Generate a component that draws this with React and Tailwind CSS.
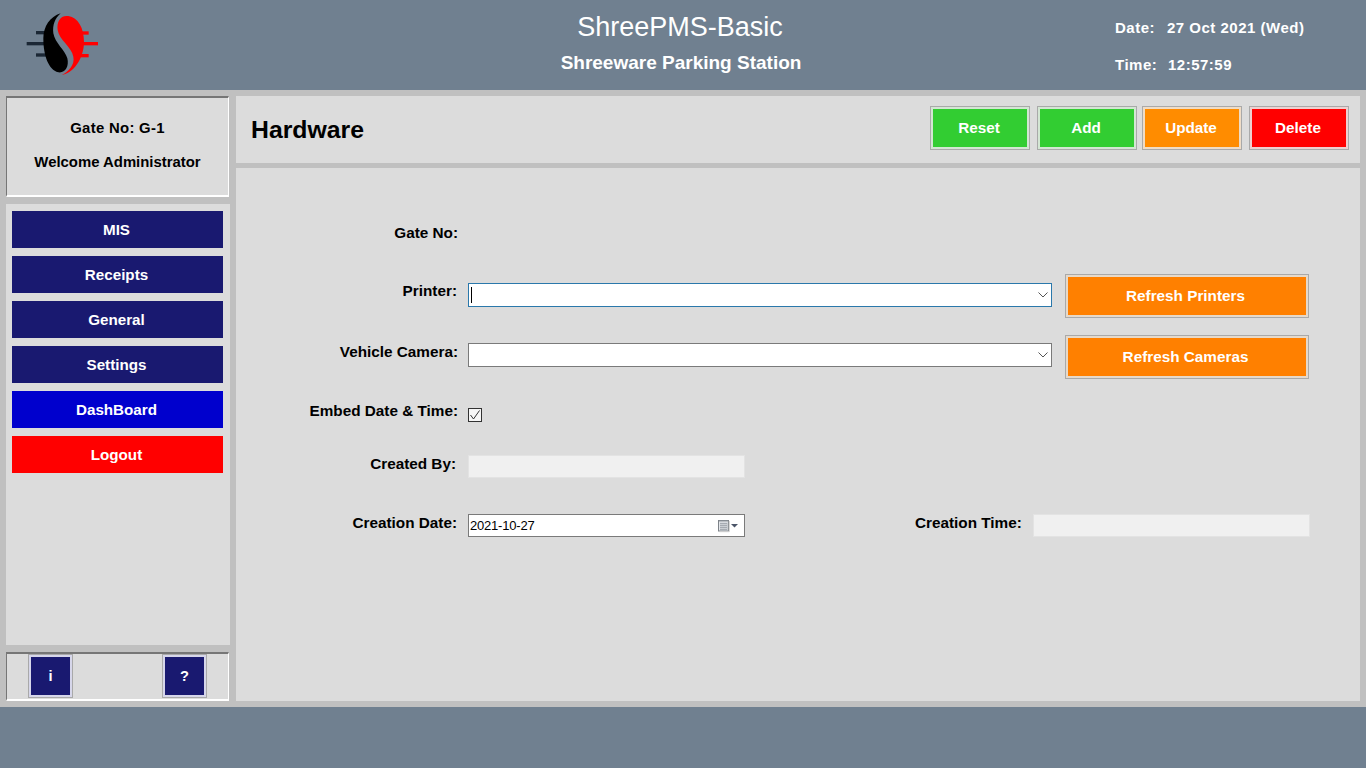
import React from "react";

const FONT = "font-['Liberation_Sans',Arial,sans-serif]";

function Logo() {
  return (
    <svg width="100" height="80" viewBox="0 0 300 240" className="blur-[0.5px]">
      <g stroke="#1b2735" strokeWidth="10" strokeLinecap="butt">
        <path d="M50 116H105" />
        <path d="M78 83H108" />
        <path d="M78 150H108" />
      </g>
      <g stroke="#f00" strokeWidth="10" strokeLinecap="butt">
        <path d="M215 84H236" />
        <path d="M218 116H264" />
        <path d="M210 152H236" />
      </g>
      <path d="M152 25C120 35 100 65 100 100C100 150 115 195 145 202C165 205 178 185 172 160C165 135 135 115 130 85C127 60 135 40 152 25Z" fill="#000" />
      <path d="M175 33C150 30 140 50 143 75C147 105 185 125 190 155C195 180 175 200 155 210C190 205 222 160 222 110C222 70 205 38 175 33Z" fill="#f00" />
    </svg>
  );
}

function TopButton({ label, fill, halo, ml }) {
  return (
    <button className={`w-[100px] h-[44px] border border-[#a9a9a9] p-[2px] ${halo} ${ml}`}>
      <span className={`flex h-full w-full items-center justify-center pr-[2px] text-[15.25px] font-bold text-white ${fill}`}>{label}</span>
    </button>
  );
}

function MenuButton({ label, fill = "bg-[#191970]" }) {
  return (
    <button className={`h-[37px] w-[211px] pr-[2px] pt-[2px] ${fill} text-[15.2px] font-bold text-white`}>{label}</button>
  );
}

function SmallButton({ label, ml }) {
  return (
    <button className={`h-[44px] w-[45px] border border-[#a9a9a9] bg-[#d6d6ea] p-[2px] ${ml}`}>
      <span className="flex h-full w-full items-center justify-center bg-[#191970] text-[14.67px] font-bold text-white">{label}</span>
    </button>
  );
}

function RefreshButton({ label }) {
  return (
    <button className="ml-[13px] h-[44px] w-[244px] border border-[#a9a9a9] bg-[#e6d9ca] p-[2px]">
      <span className="flex h-full w-full items-center justify-center pr-[3px] text-[15.3px] font-bold text-[#fff] bg-[#ff8000]">{label}</span>
    </button>
  );
}

function Label({ children, className = "pr-[1px]" }) {
  return (
    <div className={`w-[222px] text-right text-[15.3px] font-bold text-black ${className}`}>{children}</div>
  );
}

function Chevron() {
  return (
    <svg width="10" height="6" viewBox="0 0 10 6" className="mr-[3px] shrink-0">
      <path d="M0.5 0.5L5 5L9.5 0.5" fill="none" stroke="#555" strokeWidth="1" />
    </svg>
  );
}

function Combo({ focused }) {
  return (
    <div className={`ml-[10px] flex h-[24px] w-[584px] items-center justify-between bg-white ${focused ? "border border-[#2a78ab]" : "border border-[#7a7a7a]"}`}>
      <span className="ml-[2px] flex items-center">
        {focused && <span className="block h-[16px] w-[1px] bg-black" />}
      </span>
      <Chevron />
    </div>
  );
}

function CalendarIcon() {
  return (
    <svg width="22" height="14" viewBox="0 0 22 14" className="mr-[4px] shrink-0">
      <rect x="0.5" y="1.5" width="10" height="10.5" fill="#e4e7eb" stroke="#7d8288" />
      <path d="M1 2H10" stroke="#8f959c" />
      <path d="M2 4.5H9M2 6.5H9M2 8.5H9M2 10.5H9M3 3.5V11M5 3.5V11M7 3.5V11M9 3.5V11" stroke="#8f959c" strokeWidth="0.6" />
      <path d="M1.5 12.7H11.3V2" fill="none" stroke="#d0d0d0" />
      <path d="M13 5H20L16.5 8.5Z" fill="#4b5568" />
    </svg>
  );
}

export default function App() {
  return (
    <div className={`flex h-[768px] w-[1366px] flex-col overflow-hidden bg-[#c0c0c0] ${FONT}`}>
      <header className="flex h-[90px] shrink-0 bg-[#708090] text-white">
        <div className="w-[250px] pl-[10px] pt-[5px]">
          <Logo />
        </div>
        <div className="flex w-[860px] flex-col items-center">
          <div className="mt-[11px] h-[32px] text-[27px] leading-[32px]">ShreePMS-Basic</div>
          <div className="ml-[2px] mt-[9px] text-[19px] font-bold leading-[22px]">Shreeware Parking Station</div>
        </div>
        <div className="pl-[5px] text-[15px] font-bold tracking-[0.5px]">
          <div className="mt-[20px] flex h-[16px] items-center">
            <span className="w-[52px]">Date:</span>
            <span>27 Oct 2021 (Wed)</span>
          </div>
          <div className="mt-[21px] flex h-[16px] items-center">
            <span className="w-[53px]">Time:</span>
            <span>12:57:59</span>
          </div>
        </div>
      </header>

      <div className="flex h-[617px] shrink-0 gap-[6px] p-[6px]">
        <aside className="flex w-[224px] shrink-0 flex-col">
          <div className="flex h-[101px] w-[223px] shrink-0 flex-col items-center justify-center gap-[17px] border-b-2 border-l border-r border-t-2 border-b-white border-l-[#767676] border-r-white border-t-[#767676] bg-[#dcdcdc] pb-[2px] text-[14.9px] font-bold leading-[17px] text-black">
            <div className="tracking-[0.3px]">Gate No: G-1</div>
            <div>Welcome Administrator</div>
          </div>
          <nav className="mt-[7px] flex h-[441px] shrink-0 flex-col gap-[8px] bg-[#dcdcdc] px-[6px] pt-[7px]">
            <MenuButton label="MIS" />
            <MenuButton label="Receipts" />
            <MenuButton label="General" />
            <MenuButton label="Settings" />
            <MenuButton label="DashBoard" fill="bg-[#0000cd]" />
            <MenuButton label="Logout" fill="bg-[#ff0000]" />
          </nav>
          <div className="mt-[7px] flex h-[49px] w-[223px] shrink-0 items-center border-b-2 border-l border-r border-t-2 border-b-white border-l-[#767676] border-r-white border-t-[#767676] bg-[#dcdcdc] pb-[1px]">
            <SmallButton label="i" ml="ml-[21px]" />
            <SmallButton label="?" ml="ml-[89px]" />
          </div>
        </aside>

        <main className="flex w-[1124px] shrink-0 flex-col gap-[5px]">
          <div className="flex h-[67px] shrink-0 items-center bg-[#dcdcdc]">
            <h1 className="ml-[15px] pt-[1px] text-[24.8px] font-bold leading-none text-black">Hardware</h1>
            <div className="mb-[3px] ml-auto mr-[11px] flex">
              <TopButton label="Reset" fill="bg-[#32cd32]" halo="bg-[#d3e6d3]" />
              <TopButton label="Add" fill="bg-[#32cd32]" halo="bg-[#d3e6d3]" ml="ml-[7px]" />
              <TopButton label="Update" fill="bg-[#ff8c00]" halo="bg-[#efdcc6]" ml="ml-[5px]" />
              <TopButton label="Delete" fill="bg-[#ff0000]" halo="bg-[#eed0d0]" ml="ml-[7px]" />
            </div>
          </div>

          <section className="flex h-[533px] flex-col bg-[#dcdcdc] pt-[54px]">
            <div className="flex h-[22px] items-center">
              <Label className="">Gate No:</Label>
            </div>
            <div className="mt-[30px] flex h-[44px] items-center">
              <Label className="mb-[10px] pr-[1px]">Printer:</Label>
              <div className="-mt-[1px] flex items-center self-end pb-[11px]">
                <Combo focused />
              </div>
              <RefreshButton label="Refresh Printers" />
            </div>
            <div className="mt-[17px] flex h-[44px] items-center">
              <Label className="mb-[10px]">Vehicle Camera:</Label>
              <div className="flex items-center self-end pb-[12px]">
                <Combo />
              </div>
              <RefreshButton label="Refresh Cameras" />
            </div>
            <div className="mt-[28px] flex h-[15px] items-center">
              <Label className="mb-[7px] -mr-[1px] pr-0">Embed Date &amp; Time:</Label>
              <div className="ml-[11px] flex h-[14px] w-[14px] items-center justify-center border border-[#333] bg-[#f6f6f6]">
                <svg width="12" height="12" viewBox="0 0 12 12">
                  <path d="M1.5 6L4.5 10L10.5 1.5" fill="none" stroke="#333" strokeWidth="1" />
                </svg>
              </div>
            </div>
            <div className="mt-[33px] flex h-[23px] items-center">
              <Label className="mb-[5px] pr-[2px]">Created By:</Label>
              <div className="ml-[10px] h-[23px] w-[277px] border border-[#e3e3e3] bg-[#f0f0f0]" />
            </div>
            <div className="mt-[36px] flex h-[23px] items-center">
              <Label className="mb-[5px] pr-[1px]">Creation Date:</Label>
              <div className="ml-[10px] flex h-[23px] w-[277px] items-center justify-between border border-[#7a7a7a] bg-white pl-[1px]">
                <span className="text-[13px] tracking-[-0.2px] text-black">2021-10-27</span>
                <CalendarIcon />
              </div>
              <div className="mb-[5px] ml-[170px] w-[106px] whitespace-nowrap pr-[1px] text-right text-[15.3px] font-bold text-black">Creation Time:</div>
              <div className="ml-[12px] h-[23px] w-[277px] border border-[#e3e3e3] bg-[#f0f0f0]" />
            </div>
          </section>
        </main>
      </div>

      <footer className="flex-1 bg-[#708090]" />
    </div>
  );
}
